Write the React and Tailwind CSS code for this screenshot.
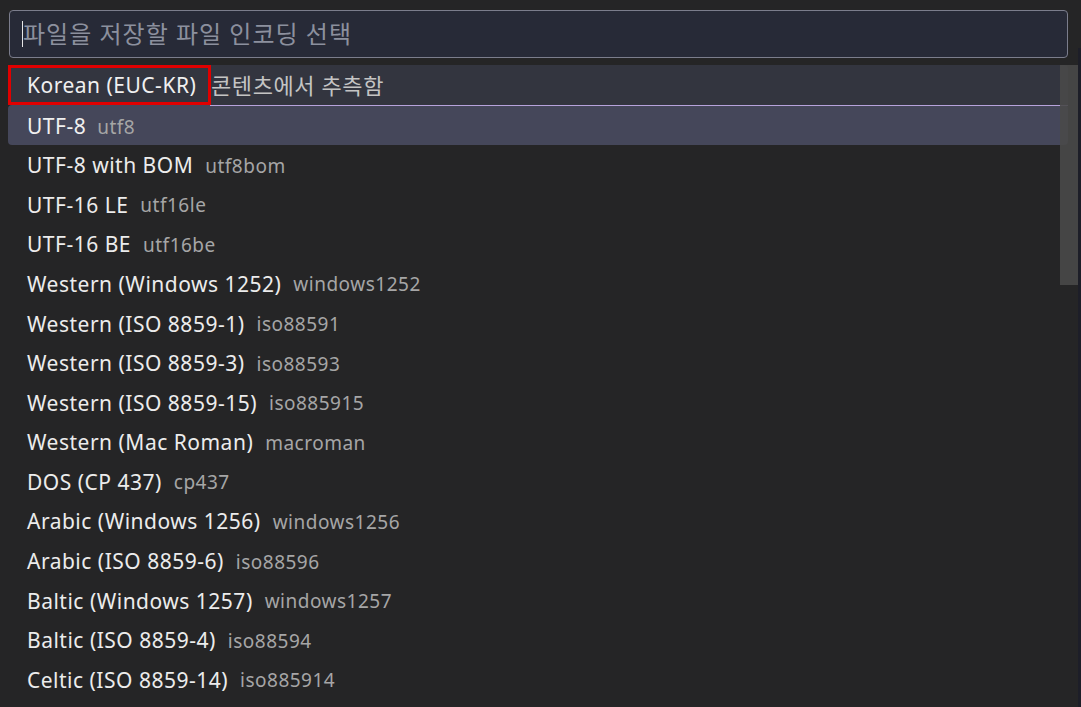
import React from "react"

const items = [
  ["UTF-8 with BOM", "utf8bom"],
  ["UTF-16 LE", "utf16le"],
  ["UTF-16 BE", "utf16be"],
  ["Western (Windows 1252)", "windows1252"],
  ["Western (ISO 8859-1)", "iso88591"],
  ["Western (ISO 8859-3)", "iso88593"],
  ["Western (ISO 8859-15)", "iso885915"],
  ["Western (Mac Roman)", "macroman"],
  ["DOS (CP 437)", "cp437"],
  ["Arabic (Windows 1256)", "windows1256"],
  ["Arabic (ISO 8859-6)", "iso88596"],
  ["Baltic (Windows 1257)", "windows1257"],
  ["Baltic (ISO 8859-4)", "iso88594"],
  ["Celtic (ISO 8859-14)", "iso885914"],
]

const font = { fontFamily: '"Segoe UI", "Noto Sans", "Noto Sans CJK KR", sans-serif' }

export default function App() {
  return (
    <div
      className="relative w-[1081px] h-[707px] overflow-hidden bg-[#252526] text-[21px] tracking-[0.5px]"
      style={font}
    >
      {/* right edge strip */}
      <div className="absolute right-0 top-[48px] bottom-0 w-[3px] bg-[#1d1e28]" />

      <div className="pt-[10px] pl-[9px] pr-[13px]">
        <div className="h-[48px] rounded-[4px] border border-[#7b7d8c] bg-[#272a37] flex items-center pl-[12px]">
          <span className="w-px h-[26px] bg-[#e6e6e6]" />
          <span className="text-[#8c909e] text-[24px] tracking-[1px]">파일을 저장할 파일 인코딩 선택</span>
        </div>
      </div>

      <div className="relative mt-[7px] pl-[8px] pr-[13px]">
        {/* scrollbar */}
        <div className="absolute right-[3px] top-0 w-[18px] h-[220px] bg-[#494949]/90 z-10" />

        <div className="relative h-[40px] bg-[#33353f] flex items-center rounded-t-[4px]">
          <div className="h-[40px] w-[203px] border-[3px] border-[#e00000] flex items-center pl-[16px] pt-[1px] text-[#f0f0f0]">
            Korean (EUC-KR)
          </div>
          <span className="text-[#c4c4c4] text-[22px] tracking-[0.6px]">콘텐츠에서 추측함</span>
        </div>
        <div className="relative h-[39.6px] bg-[#45475a] rounded-[4px] flex items-center pl-[19px] pt-[4px] gap-[11px]">
          <div className="absolute left-[202px] right-0 top-0 h-px bg-[#b7a3dc]" />
          <span className="text-[#f0f0f0]">UTF-8</span>
          <span className="text-[#a6a6a6] text-[19px]">utf8</span>
        </div>

        <div className="flex flex-col">
          {items.map(([name, code]) => (
            <div key={code} className="h-[39.6px] flex items-center pl-[19px] pt-[3px] gap-[12px]">
              <span className="text-[#ececec]">{name}</span>
              <span className="text-[#a6a6a6] text-[19px]">{code}</span>
            </div>
          ))}
        </div>
      </div>
    </div>
  )
}
